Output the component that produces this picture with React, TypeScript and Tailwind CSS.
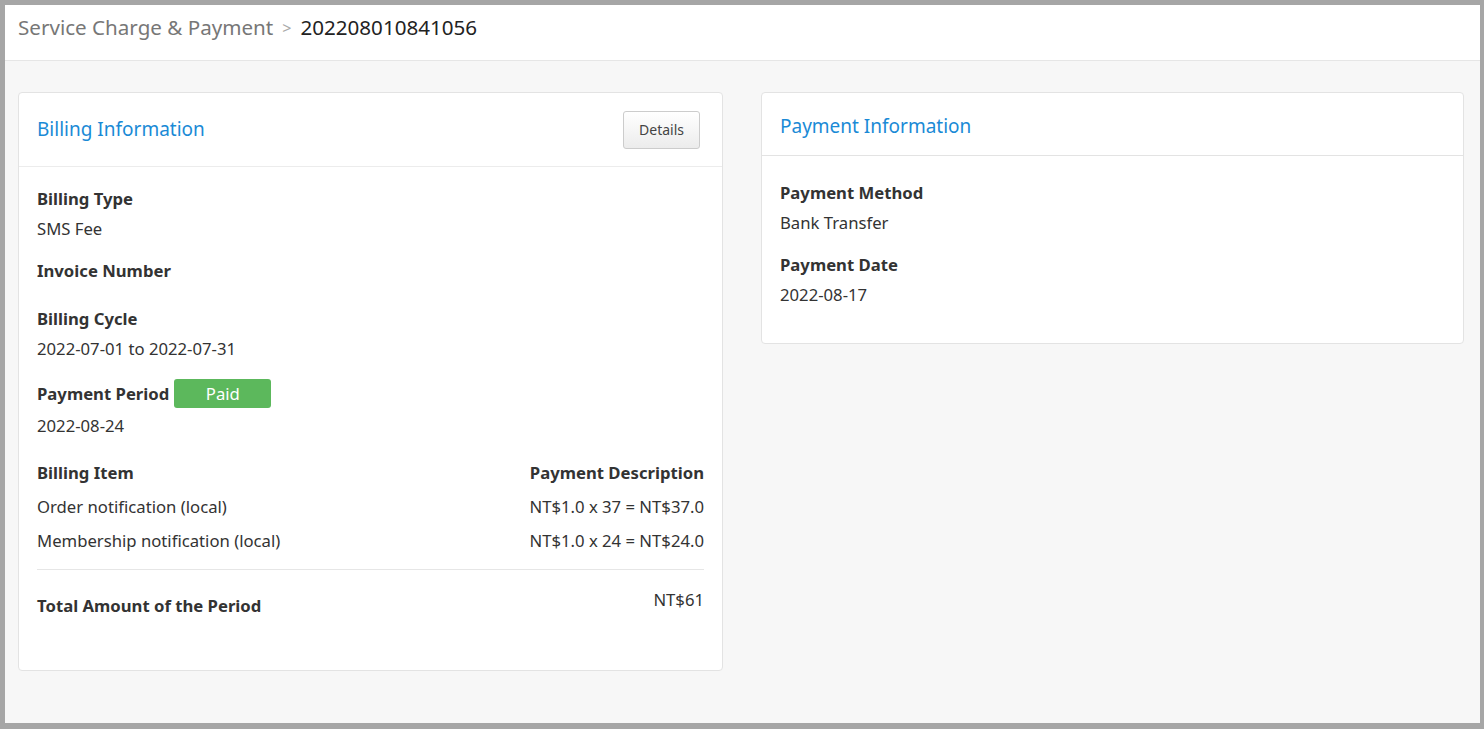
export default function App() {
  return (
    <div className="h-[729px] w-[1484px] bg-[#a6a6a6] pl-[5px] pt-[5px] pr-[4px] pb-[6px] font-['Open_Sans',sans-serif]">
      <div className="flex h-full flex-col bg-[#f7f7f7]">
        <div className="flex h-[56px] items-center border-b border-[#e6e6e6] bg-white pl-[13px] pb-[10px] text-[20.6px]">
          <span className="text-[#777]">Service Charge &amp; Payment</span>
          <span className="mx-[9px] text-[16px] text-[#aaa]">&gt;</span>
          <span className="text-[#222]">202208010841056</span>
        </div>
        <div className="flex items-start gap-[38px] pl-[13px] pr-[16px] pt-[31px]">
          <div className="w-[705px] rounded border border-[#e3e3e3] bg-white">
            <div className="flex h-[74px] items-center justify-between border-b border-[#ececec] pl-[18px] pr-[22px]">
              <h2 className="text-[19px] text-[#1a8ad6]">Billing Information</h2>
              <button className="h-[38px] rounded-[3px] border border-[#ccc] bg-gradient-to-b from-white to-[#ececec] px-[15px] text-[14px] text-[#444]">
                Details
              </button>
            </div>
            <div className="px-[18px] pt-[19px] pb-[52px] text-[16.7px] leading-[25px] text-[#333]">
              <div className="font-bold">Billing Type</div>
              <div className="mt-[5px]">SMS Fee</div>
              <div className="mt-[17px] font-bold">Invoice Number</div>
              <div className="mt-[23px] font-bold">Billing Cycle</div>
              <div className="mt-[5px]">2022-07-01 to 2022-07-31</div>
              <div className="mt-[18px] flex items-center">
                <span className="font-bold">Payment Period</span>
                <span className="ml-[5px] flex h-[29px] w-[97px] items-center justify-center rounded-[3px] bg-[#5cb85c] text-white">Paid</span>
              </div>
              <div className="mt-[5px]">2022-08-24</div>
              <div className="mt-[22px] flex justify-between font-bold">
                <span>Billing Item</span>
                <span>Payment Description</span>
              </div>
              <div className="mt-[9px] flex justify-between">
                <span>Order notification (local)</span>
                <span>NT$1.0 x 37 = NT$37.0</span>
              </div>
              <div className="mt-[9px] flex justify-between">
                <span>Membership notification (local)</span>
                <span>NT$1.0 x 24 = NT$24.0</span>
              </div>
              <div className="mt-[16px] border-t border-[#e6e6e6]" />
              <div className="mt-[17px] flex items-start justify-between">
                <span className="mt-[6px] font-bold">Total Amount of the Period</span>
                <span>NT$61</span>
              </div>
            </div>
          </div>
          <div className="flex-1 rounded border border-[#e3e3e3] bg-white">
            <div className="flex h-[63px] items-center border-b border-[#e3e3e3] pl-[18px] pt-[5px]">
              <h2 className="text-[19px] text-[#1a8ad6]">Payment Information</h2>
            </div>
            <div className="px-[18px] pt-[24px] pb-[36px] text-[16.7px] leading-[25px] text-[#333]">
              <div className="font-bold">Payment Method</div>
              <div className="mt-[5px]">Bank Transfer</div>
              <div className="mt-[17px] font-bold">Payment Date</div>
              <div className="mt-[5px]">2022-08-17</div>
            </div>
          </div>
        </div>
      </div>
    </div>
  );
}
